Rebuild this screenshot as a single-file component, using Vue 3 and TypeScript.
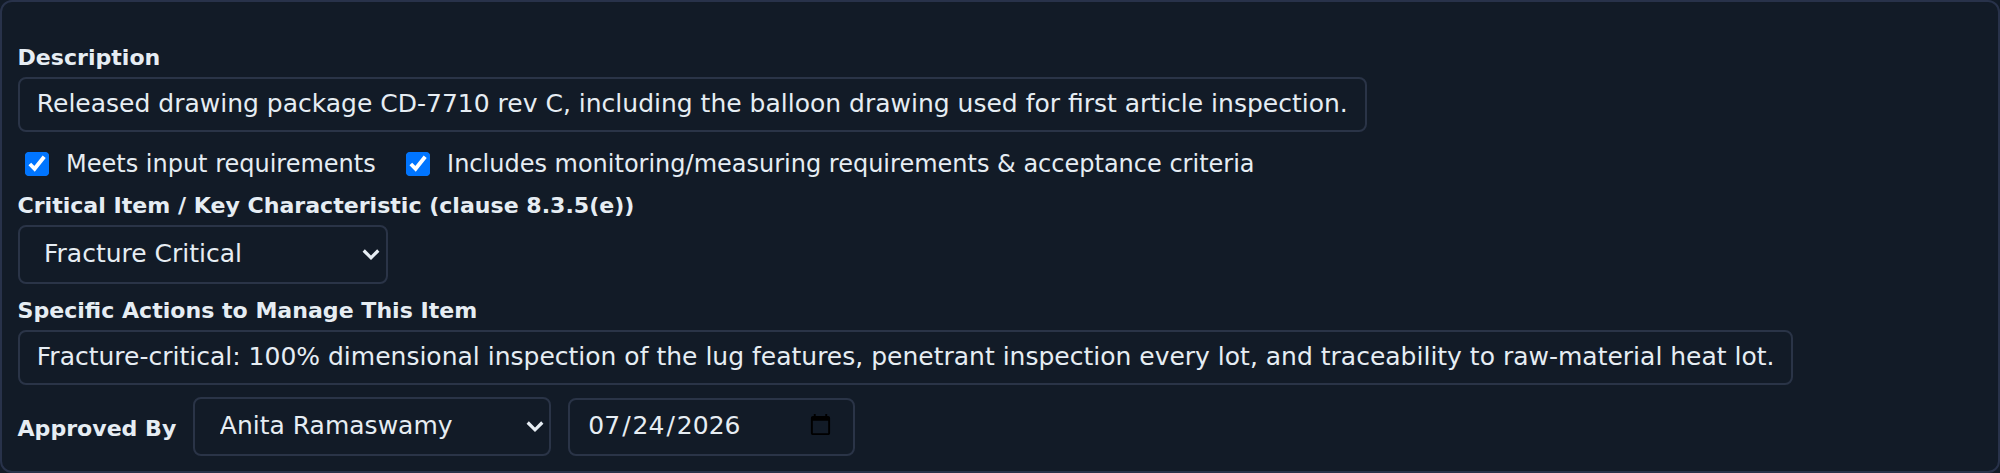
<script setup lang="ts">
const description = 'Released drawing package CD-7710 rev C, including the balloon drawing used for first article inspection.'
const actions = 'Fracture-critical: 100% dimensional inspection of the lug features, penetrant inspection every lot, and traceability to raw-material heat lot.'
const critical = ['Fracture Critical', 'Safety Critical', 'Key Characteristic', 'None']
const approvers = ['Anita Ramaswamy', 'Quality Manager']
</script>

<template>
  <section class="panel">
    <label class="field-label first" for="desc">Description</label>
    <input id="desc" class="text-input desc" type="text" :value="description" />
    <div class="checks">
      <label class="check"><input type="checkbox" checked />Meets input requirements</label>
      <label class="check"><input type="checkbox" checked />Includes monitoring/measuring requirements &amp; acceptance criteria</label>
    </div>
    <label class="field-label" for="crit">Critical Item / Key Characteristic (clause 8.3.5(e))</label>
    <select id="crit" class="select crit">
      <option v-for="c in critical" :key="c">{{ c }}</option>
    </select>
    <label class="field-label" for="act">Specific Actions to Manage This Item</label>
    <input id="act" class="text-input act" type="text" :value="actions" />
    <div class="approval">
      <label class="field-label inline" for="appr">Approved By</label>
      <select id="appr" class="select appr">
        <option v-for="a in approvers" :key="a">{{ a }}</option>
      </select>
      <input class="date" type="date" value="2026-07-24" />
    </div>
  </section>
</template>

<style>
html, body { margin: 0; background: #121b27; overflow: hidden; }
</style>

<style scoped>
.panel {
  zoom: 2;
  box-sizing: border-box;
  width: 1000px;
  height: 236.5px;
  padding: 21.5px 8px 0 7.75px;
  background: #121b27;
  border: 1px solid #28324a;
  border-radius: 6px;
  color: #e6edf3;
  font-family: "DejaVu Sans", sans-serif;
  font-size: 12px;
}
.field-label {
  display: block;
  font-size: 11.04px;
  font-weight: 700;
  line-height: 13px;
  color: #e6edf3;
  margin: 0 0 3px;
}
.field-label.inline { margin: 2px 0 0; }
.text-input, .select, .date {
  box-sizing: border-box;
  background-color: #121b27;
  border: 1px solid #2a3447;
  border-radius: 4px;
  color: #e6edf3;
  font-family: inherit;
  font-size: 12.5px;
  outline: none;
}
.text-input { display: block; height: 27.5px; padding: 0 8.4px 1px 8.65px; }
.desc { width: 674.75px; }
.act { width: 887.75px; }
.checks { display: flex; gap: 11.4px; margin: 8px 0 6px; }
.check { display: flex; align-items: center; gap: 8px; padding-left: 3.75px; line-height: 16.5px; }
.check input { width: 12.5px; height: 12.5px; margin: 0; accent-color: #0075ff; }
.select {
  appearance: none;
  -webkit-appearance: none;
  display: block;
  height: 29.5px;
  padding: 0 20px 1px 12.25px;
  background-image: url("data:image/svg+xml,%3Csvg xmlns='http://www.w3.org/2000/svg' viewBox='0 0 18 13'%3E%3Cpath d='M1.7 2.5l7.3 7.3 7.3-7.3' fill='none' stroke='%23e6edf3' stroke-width='3.2'/%3E%3C/svg%3E");
  background-repeat: no-repeat;
  background-position: right 2.8px center;
  background-size: 9px 6.5px;
}
.crit { width: 185.25px; margin-bottom: 7px; }
.approval { display: flex; align-items: center; gap: 8.5px; margin-top: 6px; }
.appr { width: 179px; }
.date { width: 143.5px; height: 29px; padding: 0 8px 1px; }
</style>
